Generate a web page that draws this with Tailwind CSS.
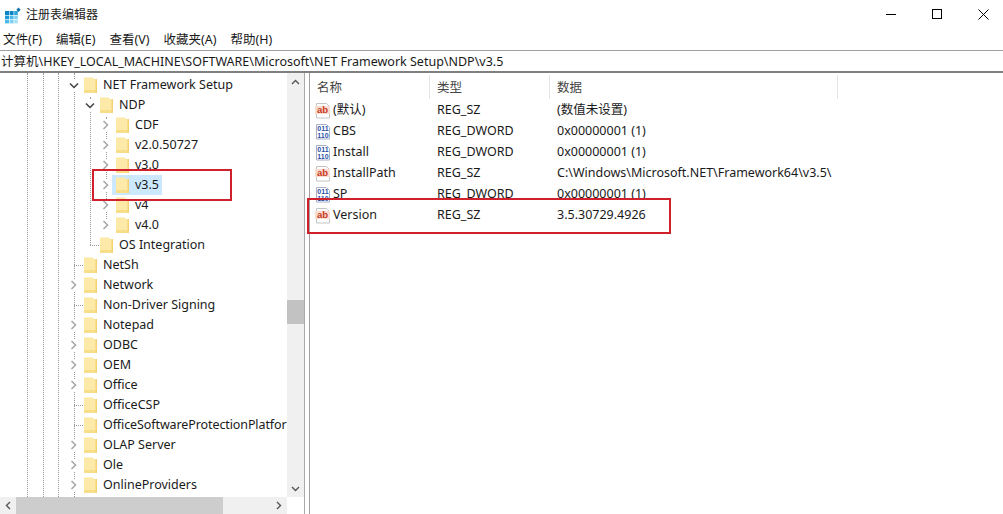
<!DOCTYPE html>
<html lang="zh-CN">
<head>
  <meta charset="UTF-8">
  <title>注册表编辑器</title>
  <script src="https://cdn.jsdelivr.net/npm/@tailwindcss/browser@4"></script>
</head>
<body class="h-[514px] w-[1003px] overflow-hidden bg-white text-[12.5px] text-[#1a1a1a] font-['Noto_Sans','Noto_Sans_CJK_SC',sans-serif]">

  <!-- Title bar -->
  <header class="flex h-[30px] items-center justify-between">
    <div class="flex items-center pl-[5px] gap-[5px]">
      <svg width="16" height="17" viewBox="0 0 16 17">
        <rect x="0" y="4" width="4" height="4" fill="#0a84c6"/><rect x="4.600" y="4" width="4" height="4" fill="#0a84c6"/><rect x="9.200" y="4" width="3.600" height="4" fill="#2aa5dc"/>
        <rect x="0" y="8.600" width="4" height="3.600" fill="#1d9ad6"/><rect x="4.600" y="8.600" width="4" height="3.600" fill="#4db8e8"/><rect x="9.200" y="8.600" width="3.600" height="3.600" fill="#7fd0f0"/>
        <rect x="0" y="12.800" width="4" height="3.600" fill="#4db8e8"/><rect x="4.600" y="12.800" width="4" height="3.600" fill="#7fd0f0"/><rect x="9.200" y="12.800" width="3.600" height="3.600" fill="#a5e0f5"/>
        <path d="M13.500 0.500l2.200 2.200-2.200 2.200-2.200-2.200z" fill="#1576b0"/>
      </svg>
      <span class="text-[12px]">注册表编辑器</span>
    </div>
    <div class="-mr-[3px] flex items-start self-start text-black">
      <div class="flex h-[28px] w-[46px] items-center justify-center"><div class="h-px w-[10px] bg-black"></div></div>
      <div class="flex h-[28px] w-[46px] items-center justify-center"><div class="size-[10px] border border-black"></div></div>
      <div class="flex h-[28px] w-[46px] items-center justify-center">
        <svg width="11" height="11" viewBox="0 0 11 11"><path d="M.5.5l10 10M10.500.5l-10 10" stroke="#000" fill="none"/></svg>
      </div>
    </div>
  </header>

  <!-- Menu -->
  <nav class="flex h-[20px] items-center gap-[14px] pl-[3px]">
    <span>文件(F)</span><span>编辑(E)</span><span>查看(V)</span><span>收藏夹(A)</span><span>帮助(H)</span>
  </nav>

  <!-- Address bar -->
  <div class="flex h-[23px] items-center whitespace-nowrap border-y border-t-[#a0a0a0] border-b-2 border-b-[#808080] pl-px pt-[2px]">计算机\HKEY_LOCAL_MACHINE\SOFTWARE\Microsoft\NET Framework Setup\NDP\v3.5</div>

  <div class="flex h-[441px]">
    <!-- Tree pane -->
    <div class="flex w-[305px] flex-col border-r border-[#a8a8a8]">
      <div class="flex min-h-0 flex-1">
        <div class="relative flex-1 overflow-hidden pt-[2px]">
          <div class="absolute inset-y-0 left-[27px] border-l border-dotted border-[#9a9a9a]"></div>
          <div class="absolute inset-y-0 left-[43px] border-l border-dotted border-[#9a9a9a]"></div>
          <div class="absolute inset-y-0 left-[58px] border-l border-dotted border-[#9a9a9a]"></div>
          <div class="absolute inset-y-0 left-[74px] border-l border-dotted border-[#9a9a9a]"></div>
          <div class="absolute left-[90px] top-[24px] h-[148px] border-l border-dotted border-[#9a9a9a]"></div>
          <div class="absolute left-[106px] top-[44px] h-[108px] border-l border-dotted border-[#9a9a9a]"></div>
          <div id="tree" class="relative"></div>
        </div>
        <!-- Vertical scrollbar -->
        <div class="flex w-[17px] flex-col bg-[#f0f0f0]">
          <div class="flex h-[17px] items-center justify-center">
            <svg width="9" height="6" viewBox="0 0 9 6"><path d="M1 5l3.500-3.500L8 5" stroke="#555" stroke-width="1.400" fill="none"/></svg>
          </div>
          <div class="mt-[210px] h-[24px] bg-[#c2c2c2]"></div>
          <div class="mt-auto flex h-[17px] items-center justify-center">
            <svg width="9" height="6" viewBox="0 0 9 6"><path d="M1 1l3.500 3.500L8 1" stroke="#555" stroke-width="1.400" fill="none"/></svg>
          </div>
        </div>
      </div>
      <!-- Horizontal scrollbar -->
      <div class="flex h-[17px] shrink-0">
        <div class="flex w-[287px] items-center bg-[#f0f0f0]">
          <div class="flex w-[16px] justify-center">
            <svg width="6" height="9" viewBox="0 0 6 9"><path d="M5 1L1.500 4.500 5 8" stroke="#555" stroke-width="1.400" fill="none"/></svg>
          </div>
          <div class="h-full w-[207px] bg-[#cdcdcd]"></div>
          <div class="ml-auto flex w-[16px] justify-center">
            <svg width="6" height="9" viewBox="0 0 6 9"><path d="M1 1l3.500 3.500L1 8" stroke="#555" stroke-width="1.400" fill="none"/></svg>
          </div>
        </div>
      </div>
    </div>

    <!-- Value list pane -->
    <div class="ml-[4px] flex-1 border-l border-[#a0a0a0]">
      <div class="flex h-[27px] items-center text-[#444]">
        <div class="h-[24px] w-[120px] border-r border-[#e5e5e5] pl-[7px] leading-[26px]">名称</div>
        <div class="h-[24px] w-[120px] border-r border-[#e5e5e5] pl-[7px] leading-[26px]">类型</div>
        <div class="h-[24px] w-[288px] border-r border-[#e5e5e5] pl-[7px] leading-[26px]">数据</div>
      </div>
      <div id="values"></div>
    </div>
  </div>

  <!-- Annotations -->
  <div class="absolute left-[92px] top-[169px] h-[32px] w-[140px] border-2 border-[#d0202c]"></div>
  <div class="absolute left-[307px] top-[198px] h-[36px] w-[364px] border-2 border-[#d0202c]"></div>

  <script>
    const chevronRight = '<svg width="7" height="10" viewBox="0 0 7 10"><path d="M1.500 1l4 4-4 4" stroke="#a6a6a6" stroke-width="1.500" fill="none"/></svg>';
    const chevronDown = '<svg width="10" height="7" viewBox="0 0 10 7"><path d="M1 1.500l4 4 4-4" stroke="#404040" stroke-width="1.500" fill="none"/></svg>';
    const folder = '<svg class="shrink-0" width="13" height="16" viewBox="0 0 13 16"><path d="M0 .5h9l1 1.500h3V16H0z" fill="#fde9a8"/><rect x="0" y="13" width="13" height="3" fill="#f9de8a"/><rect x="11.500" y="2" width="1.500" height="14" fill="#f4d272"/></svg>';

    // [name, left offset of the chevron slot, state]
    const treeRows = [
      ['NET Framework Setup', 68, 'open'],
      ['NDP', 84, 'open'],
      ['CDF', 100, 'closed'],
      ['v2.0.50727', 100, 'closed'],
      ['v3.0', 100, 'closed'],
      ['v3.5', 100, 'selected'],
      ['v4', 100, 'closed'],
      ['v4.0', 100, 'closed'],
      ['OS Integration', 84, 'leaf'],
      ['NetSh', 68, 'leaf'],
      ['Network', 68, 'closed'],
      ['Non-Driver Signing', 68, 'leaf'],
      ['Notepad', 68, 'closed'],
      ['ODBC', 68, 'closed'],
      ['OEM', 68, 'closed'],
      ['Office', 68, 'closed'],
      ['OfficeCSP', 68, 'leaf'],
      ['OfficeSoftwareProtectionPlatfor', 68, 'leaf'],
      ['OLAP Server', 68, 'closed'],
      ['Ole', 68, 'closed'],
      ['OnlineProviders', 68, 'closed'],
    ];

    function slot(state) {
      if (state === 'leaf') {
        return '<span class="w-[16px] shrink-0 pl-[6px]"><span class="block w-[9px] border-t border-dotted border-[#9a9a9a]"></span></span>';
      }
      const icon = state === 'open' ? chevronDown : chevronRight;
      return `<span class="w-[16px] shrink-0"><span class="flex h-[11px] w-[11px] items-center justify-center bg-white">${icon}</span></span>`;
    }

    document.getElementById('tree').innerHTML = treeRows.map(([name, left, state]) => {
      const label = state === 'selected' ? '-ml-[4px] bg-[#cce8ff] pl-[4px]' : '';
      const text = name.length > 30 ? 'pl-[6px] tracking-[-0.1px]' : 'pl-[6px] pr-[3px]';
      return `
        <div class="flex h-[20px] items-center whitespace-nowrap" style="padding-left:${left}px">
          ${slot(state)}
          <span class="relative flex h-[20px] shrink-0 items-center ${label}">
            ${folder}
            <span class="${text}">${name}</span>
          </span>
        </div>`;
    }).join('');

    const abIcon = '<svg class="shrink-0" width="16" height="16" viewBox="0 0 16 16"><path d="M1.500 .5h10l3 3v11.500h-13z" fill="#fff" stroke="#c4c4c4"/><rect x="0" y="3" width="15" height="8" fill="#fbdcd0"/><text x="7.500" y="10" text-anchor="middle" font-size="9.500" font-weight="700" fill="#c83a20" font-family="Liberation Sans">ab</text></svg>';
    const binIcon = '<svg class="shrink-0" width="16" height="16" viewBox="0 0 16 16"><path d="M1.500 .5h10l3 3v11.500h-13z" fill="#fff" stroke="#a8b0c8"/><text x="8" y="7" text-anchor="middle" font-size="7" font-weight="700" fill="#2a50a8" font-family="Liberation Sans">011</text><text x="8" y="13.500" text-anchor="middle" font-size="7" font-weight="700" fill="#2a50a8" font-family="Liberation Sans">110</text></svg>';

    const valueRows = [
      [abIcon, '(默认)', 'REG_SZ', '(数值未设置)'],
      [binIcon, 'CBS', 'REG_DWORD', '0x00000001 (1)'],
      [binIcon, 'Install', 'REG_DWORD', '0x00000001 (1)'],
      [abIcon, 'InstallPath', 'REG_SZ', 'C:\\Windows\\Microsoft.NET\\Framework64\\v3.5\\'],
      [binIcon, 'SP', 'REG_DWORD', '0x00000001 (1)'],
      [abIcon, 'Version', 'REG_SZ', '3.5.30729.4926'],
    ];

    document.getElementById('values').innerHTML = valueRows.map(([icon, name, type, data]) => `
      <div class="flex h-[21px] items-center whitespace-nowrap">
        <div class="flex w-[120px] items-center gap-[2px] pl-[5px]">${icon}<span>${name}</span></div>
        <div class="w-[120px] pl-[7px]">${type}</div>
        <div class="pl-[7px]">${data}</div>
      </div>`).join('');
  </script>
</body>
</html>
